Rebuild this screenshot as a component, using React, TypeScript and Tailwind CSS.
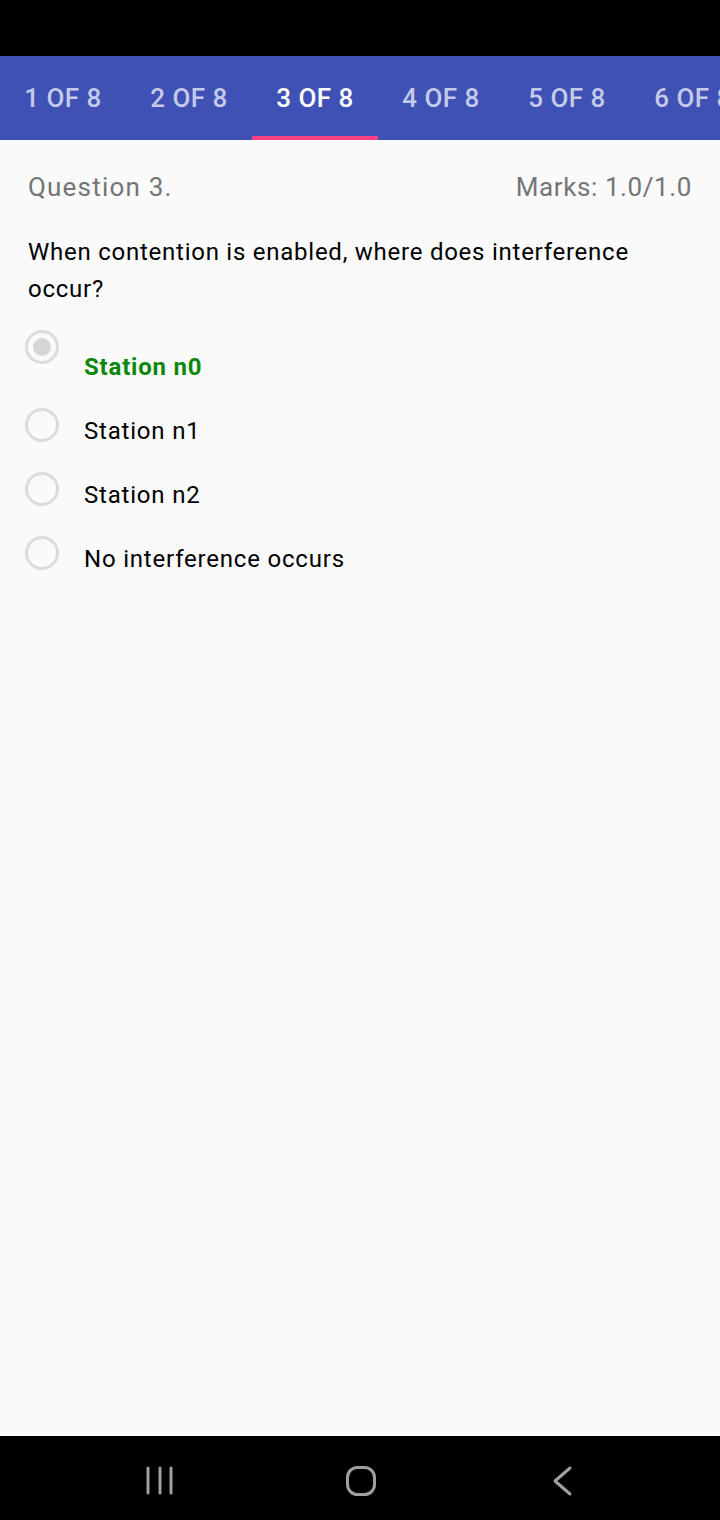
import React from "react";

const tabs = ["1 OF 8", "2 OF 8", "3 OF 8", "4 OF 8", "5 OF 8", "6 OF 8"];

const options = [
  { label: "Station n0", selected: true },
  { label: "Station n1", selected: false },
  { label: "Station n2", selected: false },
  { label: "No interference occurs", selected: false },
];

const Radio = ({ checked }: { checked: boolean }) => (
  <div className="w-[34px] h-[34px] rounded-full border-[3px] border-[#dcdcdc] flex items-center justify-center shrink-0">
    {checked && <div className="w-[18px] h-[18px] rounded-full bg-[#d6d6d6]" />}
  </div>
);

const App = () => {
  return (
    <main
      className="flex flex-col w-[720px] h-[1520px] bg-[#fafafa] overflow-hidden"
      style={{ fontFamily: "Roboto, 'Noto Sans', sans-serif" }}
    >
      <div className="h-[56px] bg-black shrink-0" />
      <nav className="h-[84px] bg-[#3f51b5] flex shrink-0 overflow-hidden">
        {tabs.map((t, i) => (
          <div
            key={t}
            className={`relative w-[126px] shrink-0 flex items-center justify-center whitespace-nowrap text-[26px] font-medium tracking-[0.5px] ${
              i === 2 ? "text-white" : "text-[#c5cae9]"
            }`}
          >
            {t}
            {i === 2 && (
              <div className="absolute bottom-0 left-0 right-0 h-[4px] bg-[#ff4081]" />
            )}
          </div>
        ))}
      </nav>

      <section className="flex-1 flex flex-col px-[28px]">
        <div className="flex justify-between items-center mt-[28px] h-[39px] text-[26px] tracking-[0.6px] text-[#757575]">
          <span className="tracking-[1.2px]">Question 3.</span>
          <span>Marks: 1.0/1.0</span>
        </div>
        <p className="mt-[27px] text-[24px] leading-[37px] tracking-[0.75px] text-black">
          When contention is enabled, where does interference occur?
        </p>
        <div className="flex flex-col mt-[22px] -ml-[3px]">
          {options.map((o) => (
            <div
              key={o.label}
              className={`flex items-start gap-[25px] ${o.selected ? "h-[78px]" : "h-[64px]"}`}
            >
              <Radio checked={o.selected} />
              <span
                className={`text-[24px] leading-[34px] tracking-[0.8px] ${
                  o.selected
                    ? "font-bold tracking-[0.3px] text-[#0b870b] mt-[20px]"
                    : "text-black mt-[6px]"
                }`}
              >
                {o.label}
              </span>
            </div>
          ))}
        </div>
      </section>

      <footer className="h-[84px] bg-black shrink-0 flex items-start pt-[29px] pl-[145px]">
        <svg width="28" height="32" viewBox="0 0 28 32">
          <g stroke="#a0a0a0" strokeWidth="3" strokeLinecap="round">
            <line x1="3" y1="3" x2="3" y2="28" />
            <line x1="15" y1="3" x2="15" y2="28" />
            <line x1="26" y1="3" x2="26" y2="28" />
          </g>
        </svg>
        <svg width="34" height="34" viewBox="0 0 34 34" className="ml-[171px]">
          <rect x="3.5" y="2.5" width="27" height="27" rx="10" fill="none" stroke="#a0a0a0" strokeWidth="3" />
        </svg>
        <svg width="24" height="32" viewBox="0 0 24 32" className="ml-[172px]">
          <polyline points="20,3 5,16 20,29" fill="none" stroke="#a0a0a0" strokeWidth="3" strokeLinecap="round" strokeLinejoin="round" />
        </svg>
      </footer>
    </main>
  );
};

export default App;
